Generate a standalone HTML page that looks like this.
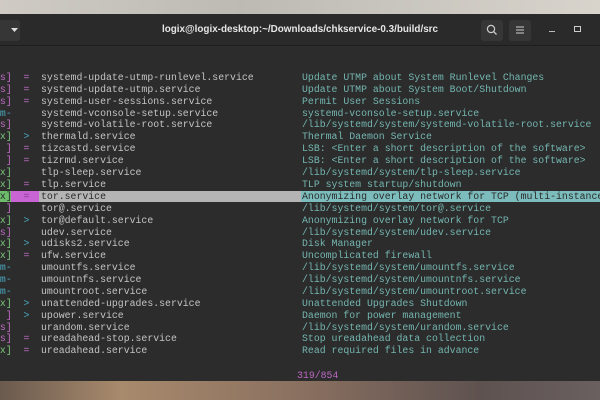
<!DOCTYPE html>
<html><head><meta charset="utf-8"><style>
*{margin:0;padding:0;box-sizing:border-box}
body{width:600px;height:400px;overflow:hidden;background:#c9c6c0;position:relative;font-family:"Liberation Mono",monospace}
#top{position:absolute;left:0;top:0;width:600px;height:15px;background:linear-gradient(90deg,#cfcbc4,#bdbab4 40%,#d8d4cc)}
#bot{position:absolute;left:0;top:381px;width:600px;height:19px;background:linear-gradient(90deg,#6a5a4e,#a88a6c 20%,#8a7060 50%,#5e5250 80%,#6a6060)}
#title{position:absolute;left:0;top:14px;width:600px;height:32px;background:#2a2a2a;border-bottom:1px solid #1e1e1e}
#title .t{position:absolute;left:0;width:600px;top:10px;text-align:center;color:#e6e6e6;font:bold 9.9px "Liberation Sans",sans-serif}
.btn{position:absolute;top:6px;width:22px;height:21px;background:#363636;border-radius:3px}
#term{position:absolute;left:0;top:46px;width:600px;height:335px;background:#2c2c2c;overflow:hidden}
.row{position:absolute;left:0;width:600px;height:12px;font-size:9.85px;line-height:12px;white-space:pre;color:#c4c4c4;margin-top:1px}
.row span{position:absolute;top:0}
.s{left:-6px}.y{left:23.5px}.n{left:41px}.x{left:302px;color:#74b6b0}
.m{color:#c06cc4}.g{color:#7cc97c}.b{color:#4aa8c0}
</style></head><body>
<div id="top"></div>
<div id="title">
<div class="btn" style="left:-8px;width:28px"></div>
<svg style="position:absolute;left:11px;top:14px" width="7" height="4"><path d="M0 0H7L3.5 4Z" fill="#ddd"/></svg>
<div class="t">logix@logix-desktop:~/Downloads/chkservice-0.3/build/src</div>
<div class="btn" style="left:481px"></div>
<svg style="position:absolute;left:486px;top:10px" width="12" height="12"><circle cx="5" cy="5" r="3.6" stroke="#ccc" stroke-width="1.2" fill="none"/><path d="M7.6 7.6L10.5 10.5" stroke="#ccc" stroke-width="1.3"/></svg>
<div class="btn" style="left:509px"></div>
<svg style="position:absolute;left:515px;top:11px" width="10" height="10"><path d="M1 2H9M1 5H9M1 8H9" stroke="#ccc" stroke-width="1"/></svg>
<div style="position:absolute;left:549px;top:17px;width:6px;height:1px;background:#bbb"></div>
<div style="position:absolute;left:574px;top:12px;width:7px;height:6px;border:1px solid #ccc"></div>
</div>
<div id="term">
<div style="position:absolute;left:0;top:145px;width:11px;height:11px;background:#6cbc6c"></div>
<div style="position:absolute;left:11px;top:145px;width:28px;height:11px;background:#c864d4"></div>
<div style="position:absolute;left:39px;top:145px;width:262px;height:11px;background:#b4b4b4"></div>
<div style="position:absolute;left:301px;top:145px;width:299px;height:11px;background:#7cbcbc"></div>
<div class="row" style="top:25px"><span class="s m">[s]</span><span class="y m">=</span><span class="n">systemd-update-utmp-runlevel.service</span><span class="x">Update UTMP about System Runlevel Changes</span></div>
<div class="row" style="top:37px"><span class="s m">[s]</span><span class="y m">=</span><span class="n">systemd-update-utmp.service</span><span class="x">Update UTMP about System Boot/Shutdown</span></div>
<div class="row" style="top:49px"><span class="s m">[s]</span><span class="y m">=</span><span class="n">systemd-user-sessions.service</span><span class="x">Permit User Sessions</span></div>
<div class="row" style="top:61px"><span class="s b">-m-</span><span class="n">systemd-vconsole-setup.service</span><span class="x">systemd-vconsole-setup.service</span></div>
<div class="row" style="top:72px"><span class="s m">[s]</span><span class="n">systemd-volatile-root.service</span><span class="x">/lib/systemd/system/systemd-volatile-root.service</span></div>
<div class="row" style="top:84px"><span class="s g">[x]</span><span class="y b">&gt;</span><span class="n">thermald.service</span><span class="x">Thermal Daemon Service</span></div>
<div class="row" style="top:96px"><span class="s m">[ ]</span><span class="y m">=</span><span class="n">tizcastd.service</span><span class="x">LSB: &lt;Enter a short description of the software&gt;</span></div>
<div class="row" style="top:108px"><span class="s m">[ ]</span><span class="y m">=</span><span class="n">tizrmd.service</span><span class="x">LSB: &lt;Enter a short description of the software&gt;</span></div>
<div class="row" style="top:120px"><span class="s g">[x]</span><span class="n">tlp-sleep.service</span><span class="x">/lib/systemd/system/tlp-sleep.service</span></div>
<div class="row" style="top:132px"><span class="s g">[x]</span><span class="y m">=</span><span class="n">tlp.service</span><span class="x">TLP system startup/shutdown</span></div>
<div class="row" style="top:144px;color:#2a2a2a"><span class="s">[x]</span><span class="y" style="color:#8a3a90">=</span><span class="n">tor.service</span><span class="x" style="color:#2a2a2a">Anonymizing overlay network for TCP (multi-instance)</span></div>
<div class="row" style="top:156px"><span class="s m">[ ]</span><span class="n">tor@.service</span><span class="x">/lib/systemd/system/tor@.service</span></div>
<div class="row" style="top:168px"><span class="s g">[x]</span><span class="y b">&gt;</span><span class="n">tor@default.service</span><span class="x">Anonymizing overlay network for TCP</span></div>
<div class="row" style="top:180px"><span class="s m">[s]</span><span class="n">udev.service</span><span class="x">/lib/systemd/system/udev.service</span></div>
<div class="row" style="top:191px"><span class="s g">[x]</span><span class="y b">&gt;</span><span class="n">udisks2.service</span><span class="x">Disk Manager</span></div>
<div class="row" style="top:203px"><span class="s g">[x]</span><span class="y m">=</span><span class="n">ufw.service</span><span class="x">Uncomplicated firewall</span></div>
<div class="row" style="top:215px"><span class="s b">-m-</span><span class="n">umountfs.service</span><span class="x">/lib/systemd/system/umountfs.service</span></div>
<div class="row" style="top:227px"><span class="s b">-m-</span><span class="n">umountnfs.service</span><span class="x">/lib/systemd/system/umountnfs.service</span></div>
<div class="row" style="top:239px"><span class="s b">-m-</span><span class="n">umountroot.service</span><span class="x">/lib/systemd/system/umountroot.service</span></div>
<div class="row" style="top:251px"><span class="s g">[x]</span><span class="y b">&gt;</span><span class="n">unattended-upgrades.service</span><span class="x">Unattended Upgrades Shutdown</span></div>
<div class="row" style="top:263px"><span class="s m">[ ]</span><span class="y b">&gt;</span><span class="n">upower.service</span><span class="x">Daemon for power management</span></div>
<div class="row" style="top:275px"><span class="s m">[s]</span><span class="n">urandom.service</span><span class="x">/lib/systemd/system/urandom.service</span></div>
<div class="row" style="top:286px"><span class="s m">[s]</span><span class="y m">=</span><span class="n">ureadahead-stop.service</span><span class="x">Stop ureadahead data collection</span></div>
<div class="row" style="top:298px"><span class="s g">[x]</span><span class="y m">=</span><span class="n">ureadahead.service</span><span class="x">Read required files in advance</span></div>
<div class="row" style="top:323px"><span style="left:297px;color:#b868c0">319/854</span></div>
</div>
<div id="bot"></div>
</body></html>
